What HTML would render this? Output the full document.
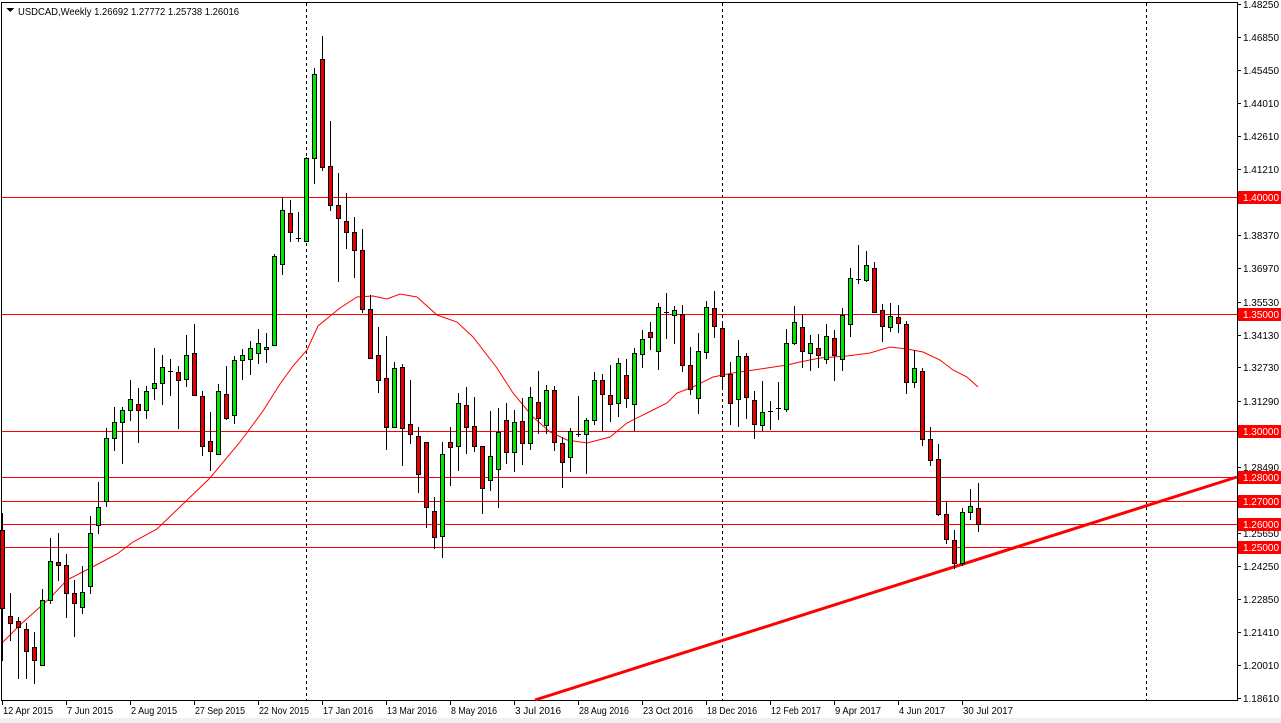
<!DOCTYPE html>
<html><head><meta charset="utf-8"><style>
html,body{margin:0;padding:0;background:#fff;width:1281px;height:723px;overflow:hidden}
svg{display:block}
text{font-family:"Liberation Sans",sans-serif;font-size:10.5px;fill:#000}
</style></head><body>
<svg id="s" width="1281" height="723" xmlns="http://www.w3.org/2000/svg" shape-rendering="crispEdges">
<rect x="0" y="718" width="1281" height="5" fill="#f0f0f0"/>
<g id="grid"></g>
<g id="ma"></g>
<g id="c"></g>
<g id="ax"></g>
<text x="18" y="15" textLength="221" lengthAdjust="spacingAndGlyphs">USDCAD,Weekly  1.26692 1.27772 1.25738 1.26016</text>
<path d="M6 8 L14 8 L10 12 Z" fill="#000"/>
</svg>
<script>
var NS="http://www.w3.org/2000/svg";
function el(p,t,a,txt){var e=document.createElementNS(NS,t);for(var k in a)e.setAttribute(k,a[k]);if(txt!=null)e.textContent=txt;document.getElementById(p).appendChild(e);return e;}
function Y(p){return 4+(1.4825-p)*2341.2;}
el('grid','rect',{x:1.5,y:2.5,width:1236,height:698,fill:'none',stroke:'#000','stroke-width':1});
[306,722,1146].forEach(function(x){el('grid','line',{x1:x+0.5,y1:3,x2:x+0.5,y2:700,stroke:'#000','stroke-dasharray':'3,3','stroke-width':1});});
var lv=[[197,'1.40000'],[314,'1.35000'],[431,'1.30000'],[477,'1.28000'],[501,'1.27000'],[524,'1.26000'],[547,'1.25000']];
lv.forEach(function(l){el('grid','rect',{x:2,y:l[0],width:1235,height:1,fill:'#f00'});});
el('grid','line',{x1:535,y1:700,x2:1237,y2:477,stroke:'#f00','stroke-width':3,'shape-rendering':'auto'});
var ma=[[2,643],[20,625],[50,598],[67,580],[100,563],[117,554],[133,542],[157,529],[183,504],[210,478],[240,442],[263,411],[280,384],[293,366],[307,350],[318,326],[340,308],[357,297],[373,296],[387,299],[400,294],[417,297],[437,315],[457,322],[473,337],[497,368],[513,393],[533,417],[550,432],[567,440],[587,443],[610,437],[627,423],[647,413],[667,403],[677,393],[693,387],[713,377],[733,373],[767,368],[787,365],[800,362],[820,358],[847,356],[870,353],[890,347],[907,349],[923,352],[940,360],[953,370],[967,377],[978,387]];
el('ma','polyline',{points:ma.map(function(p){return p.join(',')}).join(' '),fill:'none',stroke:'#f00','stroke-width':1,'shape-rendering':'auto'});
var A=[
[443,460,465,478,'r'],[461,464,468,506,'r'],[465,470,486,506,'r'],[472,483,493,510,'r'],[440,448,497,497,'g'],[402,419,448,450,'g'],[398,420,422,433,'r'],[414,422,443,461,'r'],[433,443,450,475,'r'],[423,442,453,458,'g'],[385,398,438,443,'g'],[360,379,392,398,'g'],[320,327,374,378,'g'],[304,315,327,336,'g'],[304,306,315,346,'g'],[284,298,306,314,'g'],[290,302,306,330,'r'],[288,292,306,312,'g'],[260,286,290,298,'g'],[265,274,286,302,'g'],[268,277,277,295,'f'],[273,278,284,320,'r'],[250,265,283,288,'g'],[242,264,295,295,'r'],[292,296,333,340,'r'],[308,329,337,351,'r'],[287,292,339,339,'g'],[273,294,312,313,'r'],[266,269,310,316,'g'],[261,265,269,283,'g'],[255,260,268,279,'g'],[246,256,264,271,'g'],[249,259,261,270,'g'],[190,191,258,258,'g'],[148,157,197,205,'g'],[149,159,173,180,'r'],[158,178,178,180,'f'],[117,118,180,180,'g'],[51,55,118,137,'g'],[27,44,125,127,'r'],[90,124,153,157,'r'],[129,153,163,210,'r'],[144,165,173,185,'r'],[162,173,187,207,'r'],[171,187,231,233,'r'],[220,231,267,267,'r'],[244,265,284,293,'r'],[251,282,319,335,'r'],[270,275,319,319,'g']];
var B=[
[364,367,428,465,'r'],[380,424,434,443,'r'],[427,436,474,492,'r'],[442,442,507,527,'r'],[497,511,537,548,'r'],[442,454,536,557,'g'],[427,442,447,485,'r'],[393,403,446,470,'g'],[387,405,427,453,'r'],[397,426,446,451,'r'],[446,446,488,513,'r'],[411,456,480,490,'g'],[408,432,469,507,'g'],[403,420,452,463,'r'],[410,422,452,471,'g'],[398,421,443,464,'r'],[387,397,443,449,'g'],[371,402,418,433,'r'],[385,390,425,433,'g'],[386,390,442,450,'r'],[437,443,462,487,'r'],[428,431,457,471,'g'],[396,434,434,436,'f'],[418,420,434,473,'g'],[372,380,420,424,'g'],[374,380,394,430,'r'],[365,395,404,421,'r'],[358,363,403,416,'g'],[359,375,398,407,'r'],[348,353,404,430,'g'],[330,339,354,367,'g'],[322,332,337,349,'r'],[303,307,351,369,'g'],[293,312,313,338,'g'],[306,310,315,343,'g'],[305,314,365,371,'r'],[347,365,389,394,'r'],[333,351,398,413,'g'],[301,307,352,358,'g'],[291,308,326,337,'r'],[321,328,376,389,'r'],[362,374,403,424,'r'],[340,356,399,426,'g'],[353,356,397,418,'r'],[391,400,424,438,'r'],[381,412,425,430,'g'],[401,411,411,429,'f'],[382,408,408,419,'f'],[329,343,409,411,'g'],[306,322,343,344,'g'],
[315,327,351,367,'r'],[335,343,353,370,'g'],[334,348,355,367,'r'],[324,336,359,363,'g'],[330,338,355,380,'r'],[308,315,359,370,'g'],[268,278,324,336,'g'],[245,279,279,283,'f'],[251,265,280,281,'g'],[262,268,312,312,'r'],[304,310,326,341,'r'],[303,316,327,331,'g'],[305,317,323,332,'r'],[321,324,382,393,'r'],[350,368,382,387,'g'],[368,371,439,445,'r'],[427,439,460,465,'r'],[444,459,514,515,'r'],[502,514,539,543,'r'],[530,540,563,568,'r'],[508,512,563,565,'g'],[489,506,512,519,'g'],[483,508,524,531,'r']];
var all=[[513,530,608,660,'r']];
A.forEach(function(a){all.push([a[0]*1.339,a[1]*1.339,a[2]*1.339,a[3]*1.339,a[4]].map(function(v,i){return i<4?Math.round(v):v;}));});
B.forEach(function(b){all.push(b);});
all.forEach(function(d,i){
 var c=2+8*i,h=d[0],t=d[1],b=d[2],l=d[3],k=d[4];
 el('c','rect',{x:c,y:h,width:1,height:Math.max(1,l-h+1),fill:'#000'});
 if(k=='f'||b-t<2){el('c','rect',{x:c-2,y:t,width:5,height:1,fill:'#000'});return;}
 el('c','rect',{x:c-2,y:t,width:5,height:b-t+1,fill:'#000'});
 el('c','rect',{x:c-1,y:t+1,width:3,height:b-t-1,fill:k=='g'?'#00e600':'#e60000'});
});
var pl=['1.48250','1.46850','1.45450','1.44010','1.42610','1.41210','1.38370','1.36970','1.35530','1.34130','1.32730','1.31290','1.28490','1.25650','1.24250','1.22850','1.21410','1.20010','1.18610'];
pl.forEach(function(p){var y=Math.round(Y(parseFloat(p)));el('ax','rect',{x:1237,y:y,width:4,height:1,fill:'#000'});el('ax','text',{x:1243,y:y+4,textLength:36,lengthAdjust:'spacingAndGlyphs'},p);});
lv.forEach(function(l){el('ax','rect',{x:1238,y:l[0]-6,width:43,height:13,fill:'#f00'});el('ax','text',{x:1243,y:l[0]+4,style:'fill:#fff',textLength:36,lengthAdjust:'spacingAndGlyphs'},l[1]);});
var dl=['12 Apr 2015','7 Jun 2015','2 Aug 2015','27 Sep 2015','22 Nov 2015','17 Jan 2016','13 Mar 2016','8 May 2016','3 Jul 2016','28 Aug 2016','23 Oct 2016','18 Dec 2016','12 Feb 2017','9 Apr 2017','4 Jun 2017','30 Jul 2017'];
dl.forEach(function(d,i){var x=2+64*i;el('ax','rect',{x:x,y:701,width:1,height:4,fill:'#000'});el('ax','text',{x:x+1,y:714,textLength:Math.round(d.length*4.55),lengthAdjust:'spacingAndGlyphs'},d);});
</script>
</body></html>
